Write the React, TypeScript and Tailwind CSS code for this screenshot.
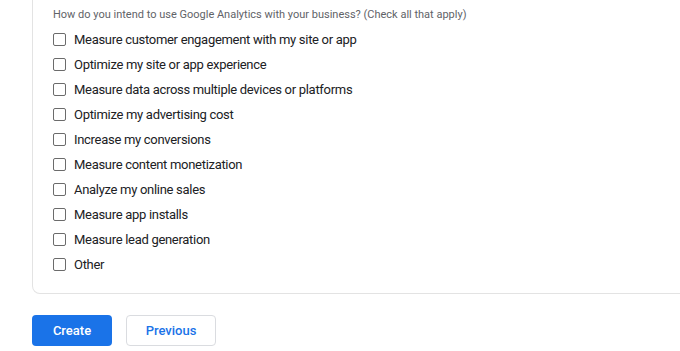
import React from "react";

const options = [
  "Measure customer engagement with my site or app",
  "Optimize my site or app experience",
  "Measure data across multiple devices or platforms",
  "Optimize my advertising cost",
  "Increase my conversions",
  "Measure content monetization",
  "Analyze my online sales",
  "Measure app installs",
  "Measure lead generation",
  "Other",
];

export default function App() {
  return (
    <div className="w-[680px] h-[351px] overflow-hidden bg-white font-['Roboto',_'Liberation_Sans',_sans-serif]">
      <div className="pl-8">
        <div className="w-[700px] border border-t-0 border-[#e3e3e3] rounded-b-lg pl-5 pb-4">
          <div className="pt-[7px] h-[23px] text-[11px] leading-4 text-[#5f6368]">
            How do you intend to use Google Analytics with your business? (Check all that apply)
          </div>
          <div className="mt-1 flex flex-col">
            {options.map((o) => (
              <label key={o} className="h-[25px] flex items-center gap-2">
                <span className="w-[13px] h-[13px] rounded-[2px] border-[1.5px] border-[#6b6b6b] shrink-0" />
                <span className="text-[13px] tracking-[-0.3px] text-[#202124] leading-4">{o}</span>
              </label>
            ))}
          </div>
        </div>
        <div className="mt-[21px] flex gap-[14px]">
          <button className="w-20 h-[31px] rounded bg-[#1a73e8] text-white text-[13px] font-medium">
            Create
          </button>
          <button className="w-[90px] h-[31px] rounded border border-[#dadce0] bg-white text-[#1a73e8] text-[13px] font-medium">
            Previous
          </button>
        </div>
      </div>
    </div>
  );
}
